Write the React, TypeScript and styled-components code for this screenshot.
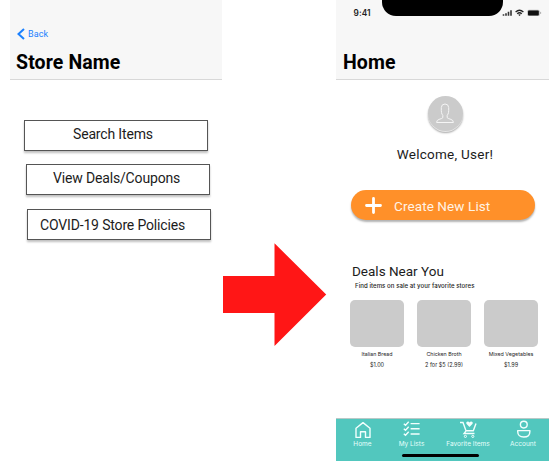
import React from "react";
import styled, { createGlobalStyle } from "styled-components";

const GlobalStyle = createGlobalStyle`
  * { box-sizing: border-box; }
  body { margin: 0; background: #fff; overflow: hidden; }
`;

const Board = styled.main`
  display: flex;
  width: 558px;
  height: 462px;
  padding-left: 10px;
  background: #fff;
  font-family: Roboto, sans-serif;
  color: #1c1c1c;
`;

const Phone = styled.section`
  display: flex;
  flex-direction: column;
  flex: none;
  width: ${(p: { $width: number }) => p.$width}px;
  height: 461px;
`;

const Header = styled.header`
  display: flex;
  flex-direction: column;
  flex: none;
  height: 80px;
  background: #f7f7f7;
  border-bottom: 1px solid #d8d8d8;
`;

const BackLink = styled.a`
  display: flex;
  align-items: center;
  gap: 3px;
  height: 14px;
  margin: 27px 0 0 7px;
  font-size: 9px;
  letter-spacing: 0.1px;
  color: #1a80ff;
`;

const Title = styled.h1<{ $top: number; $left: number; $spacing: number }>`
  margin: ${(p) => p.$top}px 0 0 ${(p) => p.$left}px;
  font-size: 19.5px;
  line-height: 24px;
  font-weight: 700;
  letter-spacing: ${(p) => p.$spacing}px;
  color: #000;
  white-space: nowrap;
`;

const Actions = styled.nav`
  display: flex;
  flex-direction: column;
  padding: 40px 0 0 14px;
`;

const ActionButton = styled.button<{ $shift: number; $gap: number; $inset: number; $drop: number }>`
  width: 184px;
  height: 31px;
  margin: ${(p) => p.$gap}px 0 0 ${(p) => p.$shift}px;
  padding: ${(p) => p.$drop}px 0 3px ${(p) => p.$inset}px;
  border: 1px solid #555;
  border-radius: 0;
  background: #fff;
  box-shadow: 0 2px 2px rgba(0, 0, 0, 0.25);
  font: 400 14px/26px Roboto, sans-serif;
  letter-spacing: -0.16px;
  color: #1c1c1c;
  text-align: left;
  white-space: nowrap;
`;

const Flow = styled.div`
  flex: none;
  width: 104px;
  margin: 243px 9px 0 1px;
`;

const StatusBar = styled.div`
  display: flex;
  height: 26px;
`;

const Clock = styled.span`
  width: 46px;
  padding: 8px 0 0 17.5px;
  font: 600 8.3px/11px Inter, sans-serif;
  letter-spacing: 0.1px;
  color: #222;
`;

const Notch = styled.div`
  width: 121px;
  height: 16px;
  border-radius: 0 0 14px 14px;
  background: #000;
`;

const Signals = styled.svg`
  width: 40px;
  height: 12px;
  margin-top: 7px;
  overflow: visible;
`;

const Profile = styled.div`
  display: flex;
  flex-direction: column;
  align-items: center;
  height: 110px;
  padding: 16px 0 0 5px;
`;

const Avatar = styled.div`
  display: grid;
  place-items: center;
  width: 35px;
  height: 35px;
  border-radius: 50%;
  background: #cbcbcb;
  box-shadow: 0 1px 0 #e6e6e6, 0 2px 2px rgba(0, 0, 0, 0.35);
`;

const Welcome = styled.p`
  margin: 14px 0 0;
  font-size: 13.5px;
  line-height: 18px;
  letter-spacing: 0.25px;
  white-space: nowrap;
`;

const CreateButton = styled.button`
  display: flex;
  align-items: center;
  flex: none;
  gap: 12px;
  width: 184px;
  height: 30px;
  margin-left: 15px;
  padding: 1px 0 0 14px;
  border: 0;
  border-radius: 15px;
  background: #ff9029;
  box-shadow: 0 2px 2px rgba(0, 0, 0, 0.3);
  font: 400 13.5px/18px Roboto, sans-serif;
  letter-spacing: 0.1px;
  color: #fff3e5;
  white-space: nowrap;
`;

const Deals = styled.section`
  display: flex;
  flex-direction: column;
  height: 198px;
  padding: 42px 0 0 14px;
`;

const DealsTitle = styled.h2`
  margin: 0 0 0 2px;
  font-size: 13.5px;
  line-height: 18px;
  font-weight: 400;
  letter-spacing: 0;
`;

const DealsNote = styled.p`
  margin: 0 0 0 5px;
  padding-top: 1px;
  font: 500 6.1px/9px Inter, sans-serif;
  letter-spacing: 0.04px;
  white-space: nowrap;
`;

const DealGrid = styled.div`
  display: grid;
  grid-template-columns: repeat(3, 54px);
  column-gap: 13px;
  margin-top: 10px;
`;

const Deal = styled.article`
  display: flex;
  flex-direction: column;
  align-items: center;
  font: 400 5.3px/8px Inter, sans-serif;
  white-space: nowrap;
`;

const Thumb = styled.div`
  width: 54px;
  height: 47px;
  margin-bottom: 3px;
  border-radius: 5px;
  background: #cbcbcb;
`;

const Price = styled.span`
  margin-top: 3px;
  font-size: 5.5px;
`;

const TabBar = styled.footer`
  display: flex;
  flex-direction: column;
  height: 43px;
  border-top: 1px solid #b9c9c7;
  background: #52c7be;
`;

const Tabs = styled.div`
  display: grid;
  grid-template-columns: 53px 45px 68px 42px;
  height: 34px;
`;

const Tab = styled.div`
  display: flex;
  flex-direction: column;
  align-items: center;
  font: 400 6.5px/9px Inter, sans-serif;
  letter-spacing: 0.02px;
  color: #e6fffc;
  white-space: nowrap;
  svg { width: 20px; height: 20px; margin-bottom: 1px; flex: none; overflow: visible; }
`;

const HomeIndicator = styled.div`
  width: 77px;
  height: 3px;
  margin: 1px 0 0 66px;
  border-radius: 2px;
  background: #000;
`;

const line = { fill: "none", stroke: "#f2fffd", strokeWidth: 1.4 } as const;

const deals = [
  ["Italian Bread", "$1.00"],
  ["Chicken Broth", "2 for $5 (2.99)"],
  ["Mixed Vegetables", "$1.99"],
];

export default function App() {
  return (
    <>
      <GlobalStyle />
      <Board>
        <Phone $width={212}>
          <Header>
            <BackLink>
              <svg width="8" height="12" viewBox="0 0 8 12">
                <path d="M7 1L1.5 6L7 11" fill="none" stroke="#1a80ff" strokeWidth="2" />
              </svg>
              Back
            </BackLink>
            <Title $top={10} $left={6} $spacing={0.12}>Store Name</Title>
          </Header>
          <Actions>
            <ActionButton $shift={0} $gap={0} $inset={48} $drop={0}>Search Items</ActionButton>
            <ActionButton $shift={2} $gap={13} $inset={26} $drop={0}>View Deals/Coupons</ActionButton>
            <ActionButton $shift={3} $gap={14} $inset={12} $drop={2}>COVID-19 Store Policies</ActionButton>
          </Actions>
        </Phone>

        <Flow>
          <svg width="104" height="104" viewBox="0 0 104 104" display="block">
            <path d="M0 33H51.5V.3L103.2 51.5L51.5 103V70H0Z" fill="#ff1616" />
          </svg>
        </Flow>

        <Phone $width={213}>
          <Header>
            <StatusBar>
              <Clock>9:41</Clock>
              <Notch />
              <Signals viewBox="0 0 40 12">
                <path d="M.5 8.8V7.3M3 8.8V6.3M5.5 8.8V4.8M8 8.8V3.3" stroke="#333" strokeWidth="1.6" />
                <path d="M12.6 5Q16.5 1.6 20.4 5M14.2 6.7Q16.5 4.8 18.8 6.7" fill="none" stroke="#222" strokeWidth="1.3" />
                <path d="M15.2 7.7Q16.5 6.8 17.8 7.7L16.5 9Z" fill="#222" />
                <rect x="24.3" y="2.8" width="12.4" height="6.2" rx="1.5" fill="#bbb" />
                <rect x="25" y="3.4" width="10.8" height="5" rx="1" fill="#111" />
                <path d="M37.6 4.9V6.9" stroke="#999" strokeWidth=".8" />
              </Signals>
            </StatusBar>
            <Title $top={25} $left={7} $spacing={0.1}>Home</Title>
          </Header>
          <Profile>
            <Avatar>
              <svg width="20" height="21" viewBox="0 0 20 21">
                <path d="M7.8 12.3C6.4 10.8 6.2 9 6.3 4.5Q6.5 1 10 1Q13.5 1 13.7 4.5C13.8 9 13.6 10.8 12.2 12.3V14.7Q12.4 15.4 16 16.4Q18.4 17.2 18.4 19.5H1.6Q1.6 17.2 4 16.4Q7.6 15.4 7.8 14.7Z" fill="none" stroke="#f5f5f5" strokeWidth="1" />
              </svg>
            </Avatar>
            <Welcome>Welcome, User!</Welcome>
          </Profile>
          <CreateButton>
            <svg width="17" height="17" viewBox="0 0 17 17">
              <path d="M8.5 1.5V15.5M1.5 8.5H15.5" stroke="#fff" strokeWidth="2.8" strokeLinecap="round" />
            </svg>
            Create New List
          </CreateButton>
          <Deals>
            <DealsTitle>Deals Near You</DealsTitle>
            <DealsNote>Find items on sale at your favorite stores</DealsNote>
            <DealGrid>
              {deals.map(([name, price]) => (
                <Deal key={name}>
                  <Thumb />
                  <span>{name}</span>
                  <Price>{price}</Price>
                </Deal>
              ))}
            </DealGrid>
          </Deals>
          <TabBar>
            <Tabs>
              <Tab>
                <svg viewBox="0 0 20 20">
                  <path d="M3 9.2L10 3.6L17 9.2V18.4H12.5V12.8H7.5V18.4H3Z" {...line} strokeLinejoin="round" />
                </svg>
                Home
              </Tab>
              <Tab>
                <svg viewBox="0 0 20 20">
                  <path d="M1.8 4.7L3.5 6.2L6.7 2.8M1.8 9.7L3.5 11.2L6.7 7.8M1.8 14.7L3.5 16.2L6.7 12.8M8.6 4.6H17.6M8.6 9.8H17.6M8.6 15H17.6" {...line} />
                </svg>
                My Lists
              </Tab>
              <Tab>
                <svg viewBox="0 0 20 20">
                  <path d="M2 3.5H5L8 11.8L6 14.5H16.5M8 11.8H15.3L18 4.5" {...line} />
                  <circle cx="7.4" cy="17.4" r="1.1" {...line} strokeWidth={1} />
                  <circle cx="14.8" cy="17.4" r="1.1" {...line} strokeWidth={1} />
                  <path d="M11.5 8L8.4 4.8C7.6 2.4 10.6 1.8 11.5 3.6C12.4 1.8 15.4 2.4 14.6 4.8Z" fill="#f2fffd" />
                </svg>
                Favorite Items
              </Tab>
              <Tab>
                <svg viewBox="0 0 20 20">
                  <circle cx="10.8" cy="5.6" r="3.4" {...line} />
                  <path d="M4.7 11.6H16.9V12.4Q16.9 18 10.8 18Q4.7 18 4.7 12.4Z" {...line} strokeLinejoin="round" />
                </svg>
                Account
              </Tab>
            </Tabs>
            <HomeIndicator />
          </TabBar>
        </Phone>
      </Board>
    </>
  );
}
